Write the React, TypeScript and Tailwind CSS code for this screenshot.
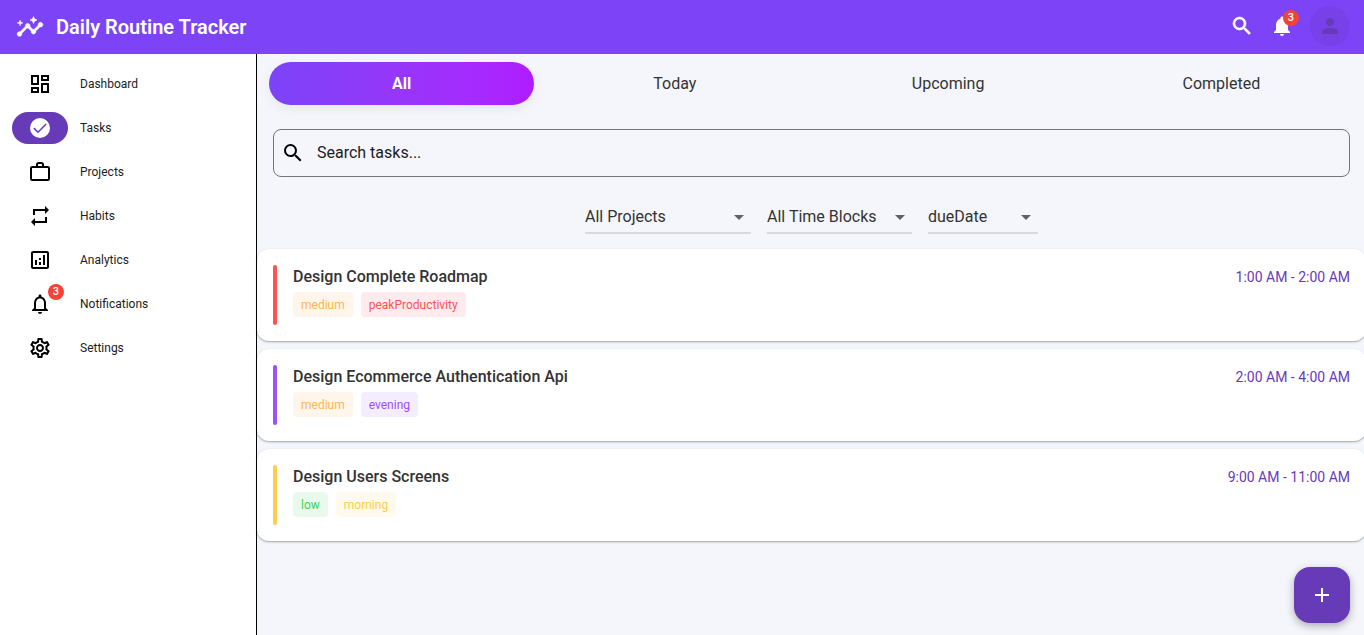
import { useState } from 'react';
import {
  MdAdd,
  MdArrowDropDown,
  MdInsights,
  MdNotifications,
  MdNotificationsNone,
  MdOutlineAnalytics,
  MdOutlineDashboard,
  MdOutlineSettings,
  MdPerson,
  MdRepeat,
  MdSearch,
} from 'react-icons/md';

function CheckDisc({ className }: { className?: string }) {
  return (
    <svg viewBox="0 0 24 24" className={className} aria-hidden="true">
      <circle cx="12" cy="12" r="10" fill="currentColor" />
      <path d="M5.9 12.1l4.1 4.1 8.1-8.2" fill="none" stroke="#673ab7" strokeWidth="1.5" />
    </svg>
  );
}

function Briefcase({ className }: { className?: string }) {
  return (
    <svg viewBox="0 0 24 24" className={className} fill="none" stroke="currentColor" strokeWidth="2" aria-hidden="true">
      <rect x="3" y="7" width="18" height="13" rx="1.2" />
      <path d="M9 7V4.6Q9 3 10.6 3H13.4Q15 3 15 4.6V7" />
    </svg>
  );
}

const navItems = [
  { label: 'Dashboard', Icon: MdOutlineDashboard },
  { label: 'Tasks', Icon: CheckDisc, active: true },
  { label: 'Projects', Icon: Briefcase },
  { label: 'Habits', Icon: MdRepeat },
  { label: 'Analytics', Icon: MdOutlineAnalytics },
  { label: 'Notifications', Icon: MdNotificationsNone, badge: 3 },
  { label: 'Settings', Icon: MdOutlineSettings },
];

const tabs = ['All', 'Today', 'Upcoming', 'Completed'];

const filters = [
  { label: 'Project', value: 'All Projects', width: 'w-[166px]' },
  { label: 'Time block', value: 'All Time Blocks', width: 'w-[145px]' },
  { label: 'Sort by', value: 'dueDate', width: 'w-[110px]' },
];

const tasks = [
  {
    title: 'Design Complete Roadmap',
    time: '1:00 AM - 2:00 AM',
    bar: 'bg-[#ff5252]',
    chips: [
      { text: 'medium', style: 'bg-[#fff5eb] text-[#ffb74d]' },
      { text: 'peakProductivity', style: 'bg-[#ffebed] text-[#ff5252]' },
    ],
  },
  {
    title: 'Design Ecommerce Authentication Api',
    time: '2:00 AM - 4:00 AM',
    bar: 'bg-[#9c50ff]',
    chips: [
      { text: 'medium', style: 'bg-[#fff5eb] text-[#ffb74d]' },
      { text: 'evening', style: 'bg-[#f4ecff] text-[#9c50ff]' },
    ],
  },
  {
    title: 'Design Users Screens',
    time: '9:00 AM - 11:00 AM',
    bar: 'bg-[#ffcc4d]',
    chips: [
      { text: 'low', style: 'bg-[#e9faec] text-[#3dd25c]' },
      { text: 'morning', style: 'bg-[#fffaed] text-[#ffcc4d]' },
    ],
  },
];

function Badge({ count, className }: { count: number; className: string }) {
  return (
    <span
      className={`absolute flex size-4 items-center justify-center rounded-full bg-[#f44336] text-[11px] leading-4 font-medium text-white ${className}`}
    >
      {count}
    </span>
  );
}

export default function App() {
  const [tab, setTab] = useState('All');

  return (
    <div className="flex min-h-screen flex-col overflow-x-clip bg-[#f5f6fb] font-[Roboto,sans-serif] text-[#1d1b20]">
      <header className="flex h-[54px] items-center bg-[#7c43f7] pr-[14px] pl-4 text-white">
        <MdInsights className="size-7 [&_path:not([fill=none])]:[stroke-width:0.5]" aria-hidden="true" />
        <h1 className="ml-3 flex-1 text-xl font-semibold">Daily Routine Tracker</h1>
        <div className="flex h-[52px] items-center self-start">
          <button aria-label="Search" className="flex size-10 items-center justify-center">
            <MdSearch className="size-6 [&_path:not([fill=none])]:[stroke-width:0.6]" />
          </button>
          <button aria-label="Notifications" className="relative flex size-10 items-center justify-center">
            <MdNotifications className="size-6" />
            <Badge count={3} className="top-1 right-[3px]" />
          </button>
          <button
            aria-label="Profile"
            className="ml-2 flex size-10 items-center justify-center rounded-full bg-[#7840e8] text-[#673ab7]"
          >
            <MdPerson className="size-6" />
          </button>
        </div>
      </header>

      <div className="-mr-0.5 flex flex-1">
        <nav className="w-[257px] shrink-0 border-r border-black bg-white px-3 pt-2">
          {navItems.map(({ label, Icon, active, badge }) => (
            <a key={label} href={`#${label.toLowerCase()}`} className="flex h-11 items-center gap-3 text-xs">
              <span
                className={`relative flex h-8 w-14 items-center justify-center rounded-full ${active ? 'bg-[#673ab7] text-white' : 'text-black'}`}
              >
                <Icon className="size-6" />
                {badge && <Badge count={badge} className="-top-1 right-1" />}
              </span>
              {label}
            </a>
          ))}
        </nav>

        <main className="min-w-0 flex-1">
          <div role="tablist" className="flex px-2 pt-2">
            {tabs.map((name) => (
              <div key={name} className="flex-1 px-1">
                <button
                  role="tab"
                  aria-selected={tab === name}
                  onClick={() => setTab(name)}
                  className={`h-[43px] w-full rounded-full text-base ${
                    tab === name
                      ? 'bg-linear-to-r from-[#7c43f7] to-[#b01cff] font-bold text-white shadow-[0_4px_12px_rgba(0,0,0,0.06)]'
                      : 'text-[#333333]'
                  }`}
                >
                  {name}
                </button>
              </div>
            ))}
          </div>

          <div className="mx-4 mt-6 flex h-12 items-center rounded-lg border border-[#74747a] pl-[7px]">
            <MdSearch className="size-6 text-black" aria-hidden="true" />
            <input
              type="text"
              aria-label="Search tasks"
              placeholder="Search tasks..."
              className="ml-3 min-w-0 flex-1 bg-transparent text-base outline-none placeholder:text-[#1d1b20]"
            />
          </div>

          <div className="mt-6 flex justify-center gap-4">
            {filters.map(({ label, value, width }) => (
              <div key={label} className={`relative border-b-2 border-[#d8d9dd] pt-px text-[#333333] ${width}`}>
                <select
                  aria-label={label}
                  className="block h-[30px] w-full appearance-none bg-transparent text-base outline-none"
                >
                  <option>{value}</option>
                </select>
                <MdArrowDropDown
                  className="pointer-events-none absolute top-1 right-0 size-6 text-[#616161]"
                  aria-hidden="true"
                />
              </div>
            ))}
          </div>

          <ul className="mt-[15px] flex flex-col gap-2">
            {tasks.map((task) => (
              <li
                key={task.title}
                className="flex h-[92px] rounded-xl bg-white p-4 shadow-[0_1px_3px_rgba(0,0,0,0.2),0_1px_1px_rgba(0,0,0,0.16)]"
              >
                <span className={`w-1 rounded-xs ${task.bar}`} />
                <div className="ml-4 flex-1">
                  <h2 className="text-base leading-[23px] font-medium text-[#333333]">{task.title}</h2>
                  <div className="mt-1 flex gap-2">
                    {task.chips.map((chip) => (
                      <span
                        key={chip.text}
                        className={`rounded-sm px-2 pt-0.5 text-xs leading-[23px] ${chip.style}`}
                      >
                        {chip.text}
                      </span>
                    ))}
                  </div>
                </div>
                <time className="text-sm leading-6 text-[#673ab7]">{task.time}</time>
              </li>
            ))}
          </ul>
        </main>
      </div>

      <button
        aria-label="Add task"
        className="fixed right-[14px] bottom-3 flex size-14 items-center justify-center rounded-2xl bg-[#673ab7] text-white shadow-[0_3px_8px_rgba(0,0,0,0.3)]"
      >
        <MdAdd className="size-6" />
      </button>
    </div>
  );
}
